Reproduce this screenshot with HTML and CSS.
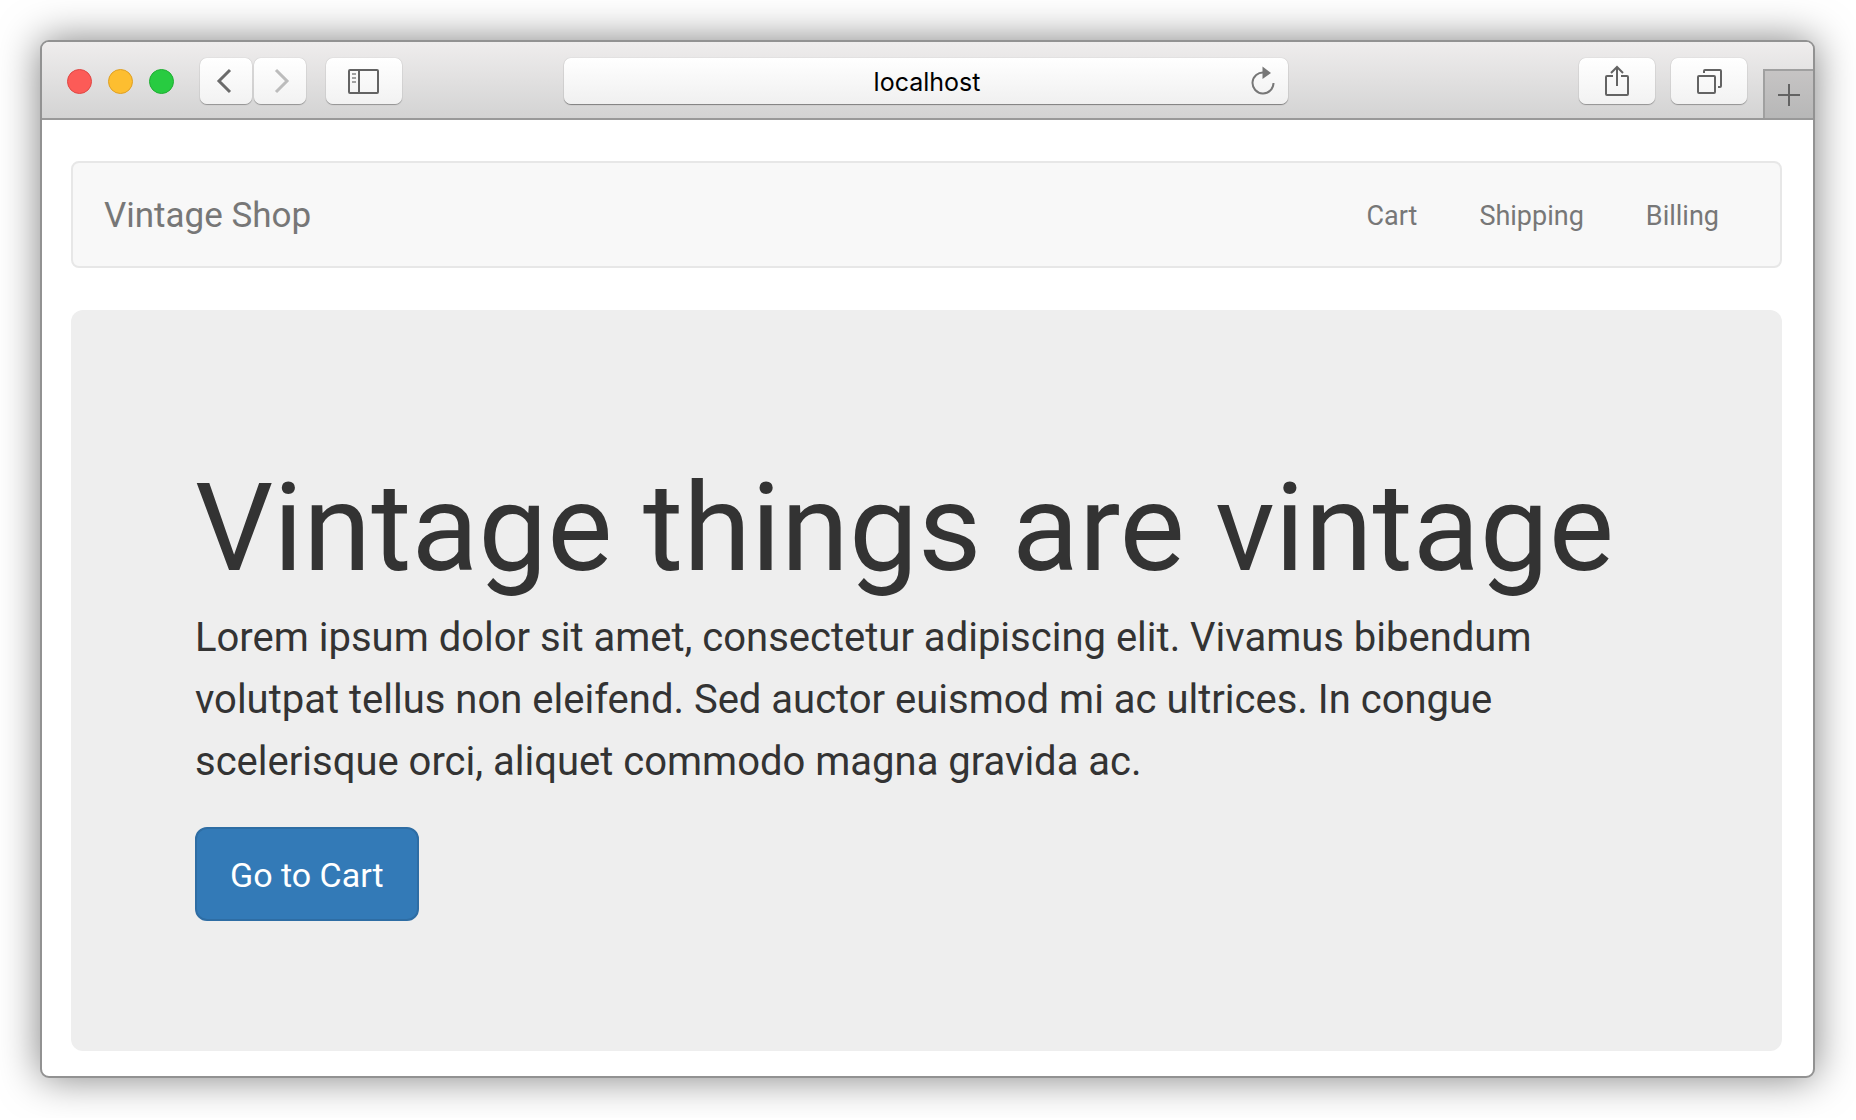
FILE: index.html
```
<!DOCTYPE html>
<html lang="en">
<head>
  <meta charset="UTF-8">
  <title>Vintage Shop</title>
  <link rel="stylesheet" href="styles.css">
</head>
<body>

<div class="window">
  <!-- Browser toolbar -->
  <header class="toolbar">
    <div class="toolbar-left">
      <div class="lights">
        <span class="light red"></span>
        <span class="light yellow"></span>
        <span class="light green"></span>
      </div>
      <div class="history">
        <button class="tool back" aria-label="Back">
          <svg width="20" height="28" viewBox="0 0 20 28"><path d="M14 3L3 14l11 11" stroke="#6b6b6b" stroke-width="3"/></svg>
        </button>
        <button class="tool forward" aria-label="Forward">
          <svg width="12" height="28" viewBox="0 0 12 28" overflow="visible"><path d="M2 3l11 11L2 25" stroke="#bcbcbc" stroke-width="3"/></svg>
        </button>
      </div>
      <button class="tool wide" aria-label="Sidebar">
        <svg width="34" height="26" viewBox="0 0 34 26">
          <rect x="2" y="2" width="29" height="23" rx="1" stroke="#636363" stroke-width="2"/>
          <path d="M12 2v23" stroke="#636363" stroke-width="2"/>
          <path d="M5 6h4M5 10h4M5 14h4" stroke="#858585" stroke-width="1.5"/>
        </svg>
      </button>
    </div>

    <div class="address">
      <input type="text" value="localhost" aria-label="Address">
      <button class="reload" aria-label="Reload">
        <svg width="26" height="30" viewBox="0 0 26 30">
          <path d="M14 6.500A10.500 10.500 0 1 0 23.500 17" stroke="#777" stroke-width="2"/>
          <path d="M12.500 0.500L21 7l-8.500 6z" fill="#777"/>
        </svg>
      </button>
    </div>

    <div class="toolbar-right">
      <button class="tool wide" aria-label="Share">
        <svg width="26" height="34" viewBox="0 0 26 34">
          <path d="M9 12H3q-1 0-1 1v17q0 1 1 1h20q1 0 1-1V13q0-1-1-1h-6M13 22V3M7 9l6-6 6 6" stroke="#636363" stroke-width="2"/>
        </svg>
      </button>
      <button class="tool wide" aria-label="Show tabs">
        <svg width="26" height="26" viewBox="0 0 26 26">
          <rect x="2" y="8" width="17" height="17" rx="1" stroke="#636363" stroke-width="2"/>
          <path d="M8 5V3q0-1 1-1h15q1 0 1 1v15q0 1-1 1h-2" stroke="#636363" stroke-width="2"/>
        </svg>
      </button>
      <button class="new-tab" aria-label="New tab">
        <svg width="24" height="24" viewBox="0 0 24 24"><path d="M12 1v22M1 12h22" stroke="#636363" stroke-width="2"/></svg>
      </button>
    </div>
  </header>

  <!-- Shop page -->
  <main class="page">
    <nav class="navbar">
      <a class="brand" href="#">Vintage Shop</a>
      <div class="links">
        <a href="#cart">Cart</a>
        <a href="#shipping">Shipping</a>
        <a href="#billing">Billing</a>
      </div>
    </nav>

    <section class="jumbotron">
      <h1>Vintage things are vintage</h1>
      <p>Lorem ipsum dolor sit amet, consectetur adipiscing elit. Vivamus bibendum volutpat tellus non eleifend. Sed auctor euismod mi ac ultrices. In congue scelerisque orci, aliquet commodo magna gravida ac.</p>
      <button class="btn">Go to Cart</button>
    </section>
  </main>
</div>

</body>
</html>
```
FILE: styles.css
```
* {
  box-sizing: border-box;
}
body {
  margin: 0;
  padding: 40px 41px 40px 40px;
  background: white;
  font-family: Roboto, sans-serif;
  color: #333;
}
svg {
  display: block;
  fill: none;
}
button {
  font-family: inherit;
  padding: 0;
  cursor: pointer;
}
a {
  color: #777;
  text-decoration: none;
}
.window {
  border: 2px solid #929292;
  border-radius: 9px;
  overflow: hidden;
  background: white;
  box-shadow: 0 0 40px rgba(0,0,0,0.5);
}

/* toolbar */
.toolbar {
  display: grid;
  grid-template-columns: 1fr minmax(200px, 724px) 1fr;
  align-items: center;
  height: 78px;
  padding: 2px 3px 0 0;
  background: linear-gradient(#efeded, #d3d3d3);
  border-bottom: 2px solid #999;
}
.toolbar-left,
.toolbar-right,
.lights,
.history {
  display: flex;
  align-items: center;
}
.toolbar-left {
  padding-left: 25px;
}
.toolbar-right {
  justify-content: flex-end;
  height: 100%;
  gap: 16px;
  margin-right: -3px;
}
.lights {
  gap: 16px;
}
.light {
  width: 25px;
  height: 25px;
  border-radius: 50%;
}
.red {
  background: #fc5b57;
  border: 1px solid #df4744;
}
.yellow {
  background: #fdbe30;
  border: 1px solid #dfa023;
}
.green {
  background: #28cb41;
  border: 1px solid #1fae32;
}
.history {
  gap: 2px;
  margin: 0 20px 0 26px;
}
.tool {
  display: flex;
  align-items: center;
  justify-content: center;
  width: 52px;
  height: 46px;
  border: none;
  border-radius: 7px;
  background: linear-gradient(#fff, #f2f2f2);
  box-shadow: 0 1px 1px rgba(0,0,0,0.3), 0 0 1px rgba(0,0,0,0.3);
}
.wide {
  width: 76px;
}
.address {
  display: flex;
  align-items: center;
  height: 46px;
  padding-right: 12px;
  border-radius: 7px;
  background: linear-gradient(#fff, #f0f0f0);
  box-shadow: 0 1px 1px rgba(0,0,0,0.4), 0 0 1px rgba(0,0,0,0.3);
}
.address input {
  flex: 1;
  min-width: 0;
  padding: 2px 0 0 40px;
  border: none;
  background: none;
  font-family: Inter, sans-serif;
  font-size: 25px;
  text-align: center;
  color: #000;
}
.reload {
  border: none;
  background: none;
}
.new-tab {
  display: flex;
  align-items: center;
  justify-content: center;
  align-self: flex-end;
  width: 50px;
  height: 49px;
  border: 2px solid #a0a0a0;
  border-width: 2px 0 0 2px;
  background: linear-gradient(#c6c4c4, #b7b7b7);
}

/* page */
.page {
  padding: 41px 31px 25px 29px;
}
.navbar {
  display: flex;
  align-items: center;
  justify-content: space-between;
  height: 107px;
  margin-bottom: 42px;
  padding: 2px 61px 0 31px;
  border: 2px solid #e7e7e7;
  border-radius: 8px;
  background: #f8f8f8;
}
.brand {
  font-size: 35px;
}
.links {
  display: flex;
  gap: 62px;
  font-size: 27px;
}
.jumbotron {
  padding: 144px 124px 130px;
  border-radius: 12px;
  background: #eee;
}
.jumbotron h1 {
  margin: 0 0 5px;
  font-size: 123px;
  line-height: 148px;
  font-weight: 400;
}
.jumbotron p {
  margin: 0 0 34px;
  font-size: 40px;
  line-height: 62px;
}
.btn {
  display: block;
  height: 94px;
  padding: 2px 33px 0;
  border: 2px solid #2e6da4;
  border-radius: 12px;
  background: #337ab7;
  color: white;
  font-size: 34px;
}
```
